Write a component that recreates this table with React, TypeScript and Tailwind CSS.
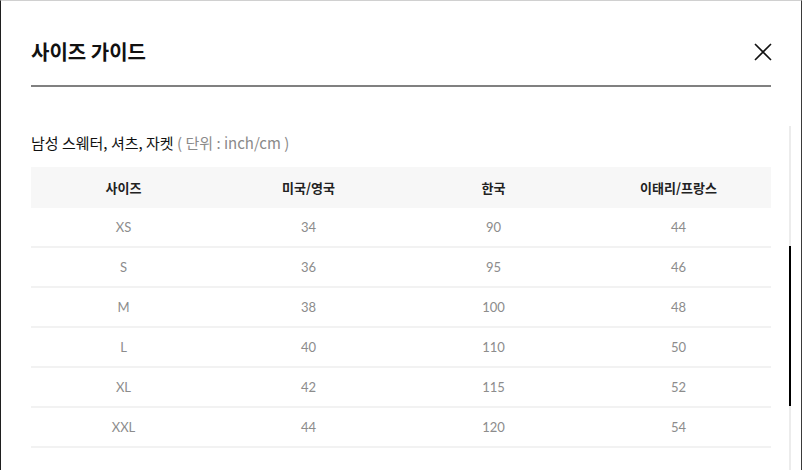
import * as React from 'react';

// ─── Data ─────────────────────────────────────────────────────────────────────

const HEADERS = ['사이즈', '미국/영국', '한국', '이태리/프랑스'];

const ROWS: string[][] = [
  ['XS', '34', '90', '44'],
  ['S', '36', '95', '46'],
  ['M', '38', '100', '48'],
  ['L', '40', '110', '50'],
  ['XL', '42', '115', '52'],
  ['XXL', '44', '120', '54'],
];

const KR = "font-['Noto_Sans_CJK_KR','Noto_Sans',sans-serif]";
const NUM = "font-['Lato','Noto_Sans_CJK_KR',sans-serif]";

// ─── Close icon ───────────────────────────────────────────────────────────────

function CloseIcon() {
  return (
    <svg width="18" height="18" viewBox="0 0 18 18" fill="none" aria-hidden="true">
      <path d="M1 1L17 17M17 1L1 17" stroke="#111" strokeWidth="1.6" />
    </svg>
  );
}

// ─── SizeGuide ────────────────────────────────────────────────────────────────

export default function App() {
  return (
    <div className="relative h-[470px] w-[802px] overflow-hidden border-t border-r border-l border-t-[#d0d0d0] border-r-[#3a3a3a] border-l-[#1f1f1f] bg-white">
      <div className="flex flex-col px-[30px] pt-[39px]">
        {/* ── Header ── */}
        <div className="flex items-center justify-between border-b-2 border-[#808080] pb-[21px]">
          <h2 className={`${KR} text-[20px] leading-[24px] font-bold text-[#111]`}>사이즈 가이드</h2>
          <button type="button" aria-label="Close" className="mr-[-1px] flex size-[18px] items-center justify-center">
            <CloseIcon />
          </button>
        </div>

        {/* ── Subtitle ── */}
        <p className={`${KR} mt-[46px] text-[15px] leading-[20px] text-[#111]`}>
          남성 스웨터, 셔츠, 자켓
          <span className="text-[#8a8a8a]"> ( 단위 : inch/cm )</span>
        </p>

        {/* ── Table ── */}
        <div className="mt-[14px] flex flex-col">
          <div className="grid h-[41px] grid-cols-4 items-center bg-[#f7f7f7]">
            {HEADERS.map((h) => (
              <div key={h} className={`${KR} text-center text-[13px] font-bold text-[#222]`}>
                {h}
              </div>
            ))}
          </div>
          {ROWS.map((row) => (
            <div key={row[0]} className="grid h-[40px] grid-cols-4 items-center border-b-2 border-[#f2f2f2] pt-[2px]">
              {row.map((cell, i) => (
                <div key={i} className={`${NUM} text-center text-[13px] text-[#8c8c8c]`}>
                  {cell}
                </div>
              ))}
            </div>
          ))}
        </div>
      </div>

      {/* ── Scrollbar (overlay) ── */}
      <div className="absolute top-[125px] right-[10px] bottom-0 w-[2px] bg-[#ececec]">
        <div className="absolute top-[120px] h-[160px] w-full bg-black" />
      </div>
    </div>
  );
}
